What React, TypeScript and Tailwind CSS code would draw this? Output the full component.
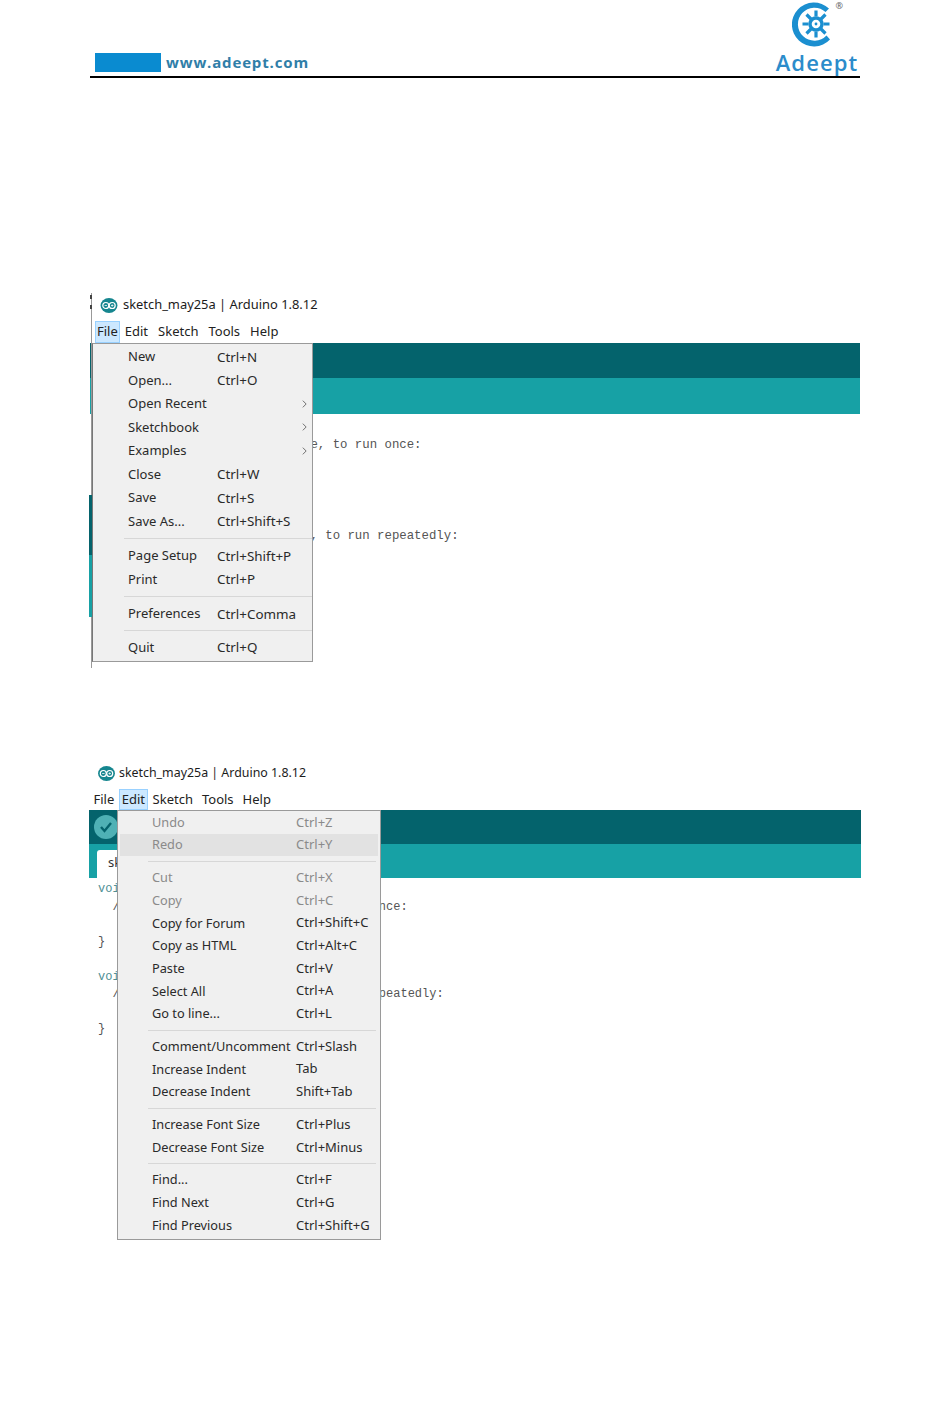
import React from 'react'

type Entry = { label?: string; keys?: string; sub?: boolean; muted?: boolean; hover?: boolean; sep?: boolean }

const fileMenu: Entry[] = [
  { label: 'New', keys: 'Ctrl+N' },
  { label: 'Open...', keys: 'Ctrl+O' },
  { label: 'Open Recent', sub: true },
  { label: 'Sketchbook', sub: true },
  { label: 'Examples', sub: true },
  { label: 'Close', keys: 'Ctrl+W' },
  { label: 'Save', keys: 'Ctrl+S' },
  { label: 'Save As...', keys: 'Ctrl+Shift+S' },
  { sep: true },
  { label: 'Page Setup', keys: 'Ctrl+Shift+P' },
  { label: 'Print', keys: 'Ctrl+P' },
  { sep: true },
  { label: 'Preferences', keys: 'Ctrl+Comma' },
  { sep: true },
  { label: 'Quit', keys: 'Ctrl+Q' },
]

const editMenu: Entry[] = [
  { label: 'Undo', keys: 'Ctrl+Z', muted: true },
  { label: 'Redo', keys: 'Ctrl+Y', muted: true, hover: true },
  { sep: true },
  { label: 'Cut', keys: 'Ctrl+X', muted: true },
  { label: 'Copy', keys: 'Ctrl+C', muted: true },
  { label: 'Copy for Forum', keys: 'Ctrl+Shift+C' },
  { label: 'Copy as HTML', keys: 'Ctrl+Alt+C' },
  { label: 'Paste', keys: 'Ctrl+V' },
  { label: 'Select All', keys: 'Ctrl+A' },
  { label: 'Go to line...', keys: 'Ctrl+L' },
  { sep: true },
  { label: 'Comment/Uncomment', keys: 'Ctrl+Slash' },
  { label: 'Increase Indent', keys: 'Tab' },
  { label: 'Decrease Indent', keys: 'Shift+Tab' },
  { sep: true },
  { label: 'Increase Font Size', keys: 'Ctrl+Plus' },
  { label: 'Decrease Font Size', keys: 'Ctrl+Minus' },
  { sep: true },
  { label: 'Find...', keys: 'Ctrl+F' },
  { label: 'Find Next', keys: 'Ctrl+G' },
  { label: 'Find Previous', keys: 'Ctrl+Shift+G' },
]

function ArduinoIcon({ className }: { className: string }) {
  return (
    <svg viewBox="0 0 18 16" className={className}>
      <ellipse cx="9" cy="8" rx="9" ry="8" fill="#16868f" />
      <circle cx="5.6" cy="8" r="3.2" fill="none" stroke="#fff" strokeWidth="1.3" />
      <circle cx="12.4" cy="8" r="3.2" fill="none" stroke="#fff" strokeWidth="1.3" />
      <path d="M4.3 8h2.6M11.1 8h2.6M12.4 6.8v2.4" stroke="#fff" strokeWidth="0.8" />
    </svg>
  )
}

function AdeeptLogo() {
  return (
    <svg viewBox="0 0 48 50" className="h-[50px] w-[48px]">
      <path d="M37 8.5A22 22 0 1 0 38 39.5L34.5 35.5A16.5 16.5 0 1 1 33.5 12Z" fill="#1b8fd0" />
      <g stroke="#1b8fd0" strokeWidth="3.2" strokeLinecap="butt">
        <path d="M24 10.5v6M24 31.5v6M10.5 24h6M31.5 24h6M14.5 14.5l4.5 4.5M29 29l4.5 4.5M33.5 14.5L29 19M19 29l-4.5 4.5" />
      </g>
      <circle cx="24" cy="24" r="6" fill="none" stroke="#1b8fd0" strokeWidth="3.4" />
      <circle cx="24" cy="24" r="1.4" fill="#1b8fd0" />
    </svg>
  )
}

function MenuRow({ entry, rowClass, labelClass, keysClass, sepClass }: { entry: Entry; rowClass: string; labelClass: string; keysClass: string; sepClass: string }) {
  if (entry.sep) {
    return (
      <div className="flex h-[10px] items-center">
        <div className={`h-px bg-[#d7d7d7] ${sepClass}`} />
      </div>
    )
  }
  return (
    <div className={`relative flex items-center ${rowClass} ${entry.hover ? 'bg-[#e2e2e2]' : ''} ${entry.muted ? 'text-[#8a8a8a]' : 'text-[#2a2a2a]'}`}>
      <span className={labelClass}>{entry.label}</span>
      <span className={keysClass}>{entry.keys}</span>
      {entry.sub && (
        <svg viewBox="0 0 6 10" className="absolute top-1/2 right-[5px] h-[9px] w-[5px] -translate-y-1/2">
          <path d="M1 1l4 4-4 4" fill="none" stroke="#555" strokeWidth="1" />
        </svg>
      )}
    </div>
  )
}

function MenuBar({ active, className, itemClass, activeClass }: { active: string; className: string; itemClass: string; activeClass: string }) {
  return (
    <div className={`flex text-[13px] text-[#222] ${className}`}>
      {['File', 'Edit', 'Sketch', 'Tools', 'Help'].map((m) => (
        <span
          key={m}
          className={`flex h-full items-center ${m === active ? `border border-[#99d1ff] bg-[#cce8ff] ${activeClass}` : itemClass}`}
        >
          {m}
        </span>
      ))}
    </div>
  )
}

function Header() {
  return (
    <header className="relative ml-[90px] h-[78px] w-[770px] border-b-2 border-black">
      <div className="absolute bottom-[4px] left-[5px] flex items-center gap-[5px]">
        <div className="h-[19px] w-[66px] bg-[#0a8bd0]" />
        <span className="text-[15px] leading-[19px] font-bold tracking-[0.85px] text-[#2f7ea8] [font-family:'Open_Sans',sans-serif]">www.adeept.com</span>
      </div>
      <div className="absolute top-0 right-0 flex w-[86px] flex-col items-center">
        <div className="relative -ml-[2px]">
          <AdeeptLogo />
          <span className="absolute top-[1px] -right-[3px] text-[9px] leading-none text-[#666]">®</span>
        </div>
        <span className="-mt-[1px] text-[22px] leading-[26px] font-semibold tracking-[1.1px] text-[#2b8ccb] [font-family:'Open_Sans',sans-serif]">Adeept</span>
      </div>
    </header>
  )
}

function FileWindow() {
  return (
    <section className="relative mt-[215px] ml-[90px] h-[375px] w-[770px] font-['Noto_Sans',sans-serif]">
      <div className="absolute top-0 left-[1px] h-[375px] w-px bg-[#999]" />
      <div className="absolute top-[2px] left-0 h-[4px] w-[2px] bg-[#444]" />
      <div className="absolute top-[12px] left-0 h-[4px] w-[2px] bg-[#444]" />
      <div className="flex h-[27px] items-center gap-[5px] pb-[3px] pl-[10px] text-[12.9px] text-[#1c1c1c]">
        <ArduinoIcon className="h-[15px] w-[18px]" />
        <span>sketch_may25a | Arduino 1.8.12</span>
      </div>
      <MenuBar active="File" className="h-[23px] pt-px pl-[5px]" itemClass="px-[5px]" activeClass="px-px" />
      <div className="h-[35px] bg-[#04636c]" />
      <div className="h-[36px] bg-[#17a1a5]" />
      <pre className="pt-[4px] pl-[13px] font-['Liberation_Mono',monospace] text-[12.35px] leading-[18.2px] text-[#555]">
        {'void setup() {\n  // put your setup code here, to run once:\n\n}\n\nvoid loop() {\n  // put your main code here, to run repeatedly:\n\n}'}
      </pre>
      <div className="absolute top-[202px] -left-[1px] h-[60px] w-[3px] bg-[#04636c]" />
      <div className="absolute top-[262px] -left-[1px] h-[62px] w-[3px] bg-[#17a1a5]" />
      <div className="absolute top-[50px] left-[2px] h-[319px] w-[221px] border border-[#9a9a9a] border-l-[#777] bg-[#f0f0f0] pt-px text-[13px]">
        {fileMenu.map((e, i) => (
          <div key={i} className={e.sep && i < 13 ? 'py-[0.5px]' : ''}>
            <MenuRow entry={e} rowClass="h-[23.5px]" labelClass="ml-[35px] w-[89px] shrink-0" keysClass="text-[13.4px]" sepClass="ml-[31px] w-[188px]" />
          </div>
        ))}
      </div>
    </section>
  )
}

function EditWindow() {
  return (
    <section className="relative mt-[92px] ml-[89px] h-[480px] w-[772px] font-['Noto_Sans',sans-serif]">
      <div className="flex h-[26px] items-center gap-[4px] pt-[1px] pl-[9px] text-[12.4px] text-[#1c1c1c]">
        <ArduinoIcon className="h-[15px] w-[17px]" />
        <span>sketch_may25a | Arduino 1.8.12</span>
      </div>
      <MenuBar active="Edit" className="h-[24px] pt-[3px]" itemClass="px-[4.5px]" activeClass="px-[2px]" />
      <div className="flex h-[34px] items-center bg-[#04636c] pl-[5px]">
        <div className="flex h-[24px] w-[24px] items-center justify-center rounded-full bg-[#4fb1b5]">
          <svg viewBox="0 0 14 14" className="h-[14px] w-[14px]">
            <path d="M2 7l3.5 4L12 3" fill="none" stroke="#04636c" strokeWidth="2.4" />
          </svg>
        </div>
      </div>
      <div className="flex h-[34px] items-end bg-[#17a1a5] pl-[8px]">
        <div className="h-[28px] w-[60px] rounded-t-[3px] bg-white pt-[3px] pl-[11px] text-[13px] text-[#333]">sk</div>
      </div>
      <pre className="pt-[3px] pl-[9px] font-['Liberation_Mono',monospace] text-[12px] leading-[17.5px] text-[#555]">
        <span className="text-[#4f8f95]">void</span>{' setup() {\n  // put your setup code here, to run once:\n\n}\n\n'}
        <span className="text-[#4f8f95]">void</span>{' loop() {\n  // put your main code here, to run repeatedly:\n\n}'}
      </pre>
      <div className="absolute top-[50px] left-[28px] h-[430px] w-[264px] border border-[#9a9a9a] bg-[#f0f0f0] text-[12.75px]">
        {editMenu.map((e, i) => (
          <div key={i} className="mx-[2px]">
            <MenuRow entry={e} rowClass="h-[22.7px]" labelClass="ml-[32px] w-[144px] shrink-0" keysClass="text-[13px]" sepClass="ml-[28px] w-[228px]" />
          </div>
        ))}
      </div>
    </section>
  )
}

export default function App() {
  return (
    <div className="h-[1408px] w-[950px] overflow-hidden bg-white">
      <Header />
      <FileWindow />
      <EditWindow />
    </div>
  )
}
